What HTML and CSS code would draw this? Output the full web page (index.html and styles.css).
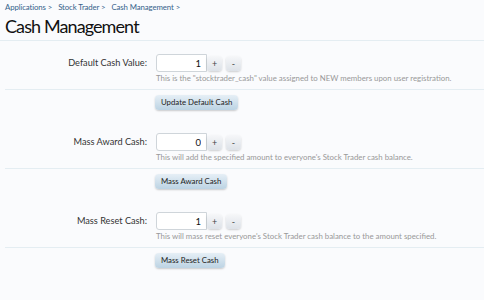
FILE: index.html
```html
<!DOCTYPE html>
<html lang="en">
<head>
    <meta charset="UTF-8">
    <title>Cash Management</title>
    <link rel="stylesheet" href="styles.css">
</head>
<body>
    <div class="breadcrumb">
        <a href="#">Applications</a> <span class="sep">&gt;</span>
        <a href="#">Stock Trader</a> <span class="sep">&gt;</span>
        <a href="#">Cash Management</a> <span class="sep">&gt;</span>
    </div>
    <h1 class="title">Cash Management</h1>

    <form class="form">
        <div class="ctrl-row">
            <label class="ctrl-label">Default Cash Value:</label>
            <div class="ctrl-unit">
                <div class="spinner">
                    <input class="spin-input" type="text" value="1">
                    <button type="button" class="spin-btn">+</button>
                    <button type="button" class="spin-btn">-</button>
                </div>
                <p class="hint">This is the "stocktrader_cash" value assigned to NEW members upon user registration.</p>
            </div>
        </div>
        <div class="submit-row">
            <button type="button" class="submit">Update Default Cash</button>
        </div>

        <div class="ctrl-row">
            <label class="ctrl-label">Mass Award Cash:</label>
            <div class="ctrl-unit">
                <div class="spinner">
                    <input class="spin-input" type="text" value="0">
                    <button type="button" class="spin-btn">+</button>
                    <button type="button" class="spin-btn">-</button>
                </div>
                <p class="hint">This will add the specified amount to everyone's Stock Trader cash balance.</p>
            </div>
        </div>
        <div class="submit-row">
            <button type="button" class="submit">Mass Award Cash</button>
        </div>

        <div class="ctrl-row">
            <label class="ctrl-label">Mass Reset Cash:</label>
            <div class="ctrl-unit">
                <div class="spinner">
                    <input class="spin-input" type="text" value="1">
                    <button type="button" class="spin-btn">+</button>
                    <button type="button" class="spin-btn">-</button>
                </div>
                <p class="hint">This will mass reset everyone's Stock Trader cash balance to the amount specified.</p>
            </div>
        </div>
        <div class="submit-row">
            <button type="button" class="submit">Mass Reset Cash</button>
        </div>
    </form>
</body>
</html>
```

FILE: styles.css
```css
body {
    margin: 0;
    background-color: #fafbfd;
    font-family: Lato, "Open Sans", sans-serif;
    color: #222;
}
.breadcrumb {
    padding: 2px 0 0 5px;
    font-size: 7.8px;
    line-height: 10px;
    height: 10px;
    letter-spacing: -0.1px;
}
.breadcrumb a {
    color: #35628a;
    text-decoration: none;
}
.breadcrumb .sep {
    color: #35628a;
    margin-right: 4px;
}
.title {
    margin: 0;
    padding: 3px 0 3px 5px;
    font-size: 18px;
    line-height: 22px;
    letter-spacing: -0.9px;
    font-weight: normal;
    color: #111;
    border-bottom: 1px solid #e4edf2;
}
.form {
    padding-left: 5px;
}
.ctrl-row {
    display: grid;
    grid-template-columns: 142px auto;
    column-gap: 9px;
    padding: 13px 0 5px;
    border-bottom: 1px solid #e4edf2;
}
.ctrl-label {
    text-align: right;
    font-size: 9.2px;
    line-height: 18px;
    color: #333;
}
.spinner {
    display: flex;
    align-items: center;
    height: 18px;
}
.spin-input {
    box-sizing: border-box;
    width: 51px;
    height: 18px;
    margin: 0;
    padding: 0 5px 0 0;
    border: 1px solid #cfd5da;
    border-radius: 3px 0 0 3px;
    background: #fff;
    text-align: right;
    font-family: Lato, sans-serif;
    font-size: 9.5px;
    color: #111;
}
.spin-btn {
    box-sizing: border-box;
    width: 15px;
    height: 15px;
    margin: 0 2px 0 0;
    padding: 0;
    border: none;
    border-radius: 4px;
    background: linear-gradient(#f6f7f9, #dde2e8);
    box-shadow: 0 1px 2px rgba(0, 0, 0, 0.18);
    font-family: Lato, sans-serif;
    font-size: 9px;
    line-height: 15px;
    color: #444;
}
.spin-btn + .spin-btn {
    margin-left: 2px;
}
.hint {
    margin: 1px 0 0;
    font-size: 7.85px;
    line-height: 11px;
    color: #999;
}
.submit-row {
    padding: 5px 0 10px 150px;
}
.submit {
    display: block;
    height: 15px;
    padding: 0 6px;
    border: none;
    border-radius: 4px;
    background: linear-gradient(#e6eff6, #bcd3e3);
    box-shadow: 0 1px 2px rgba(0, 0, 0, 0.2);
    font-family: Lato, sans-serif;
    font-size: 7.8px;
    line-height: 15px;
    color: #222;
}
```
